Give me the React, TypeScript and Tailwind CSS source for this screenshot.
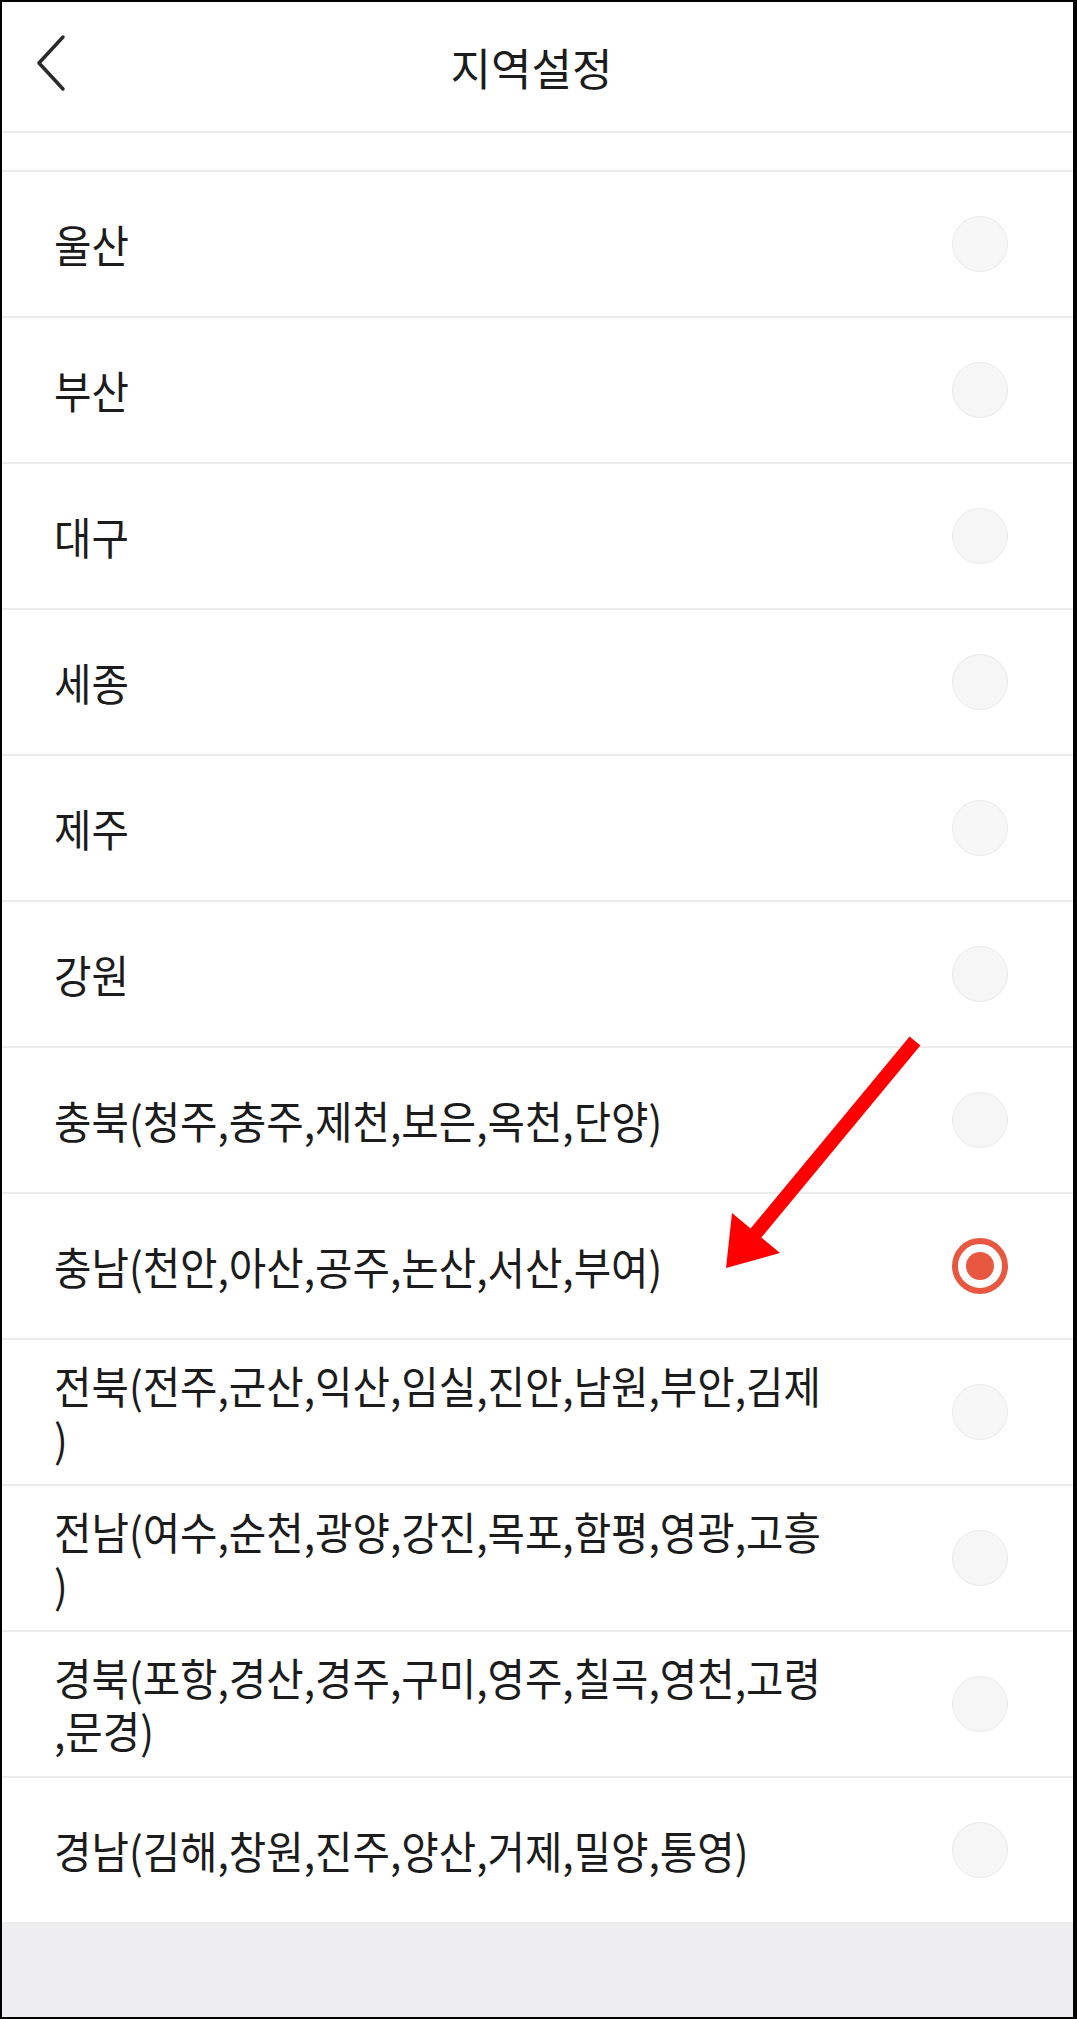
import React from "react";

type Row = { lines: string[]; selected?: boolean };

const rows: Row[] = [
  { lines: ["울산"] },
  { lines: ["부산"] },
  { lines: ["대구"] },
  { lines: ["세종"] },
  { lines: ["제주"] },
  { lines: ["강원"] },
  { lines: ["충북(청주,충주,제천,보은,옥천,단양)"] },
  { lines: ["충남(천안,아산,공주,논산,서산,부여)"], selected: true },
  { lines: ["전북(전주,군산,익산,임실,진안,남원,부안,김제", ")"] },
  { lines: ["전남(여수,순천,광양,강진,목포,함평,영광,고흥", ")"] },
  { lines: ["경북(포항,경산,경주,구미,영주,칠곡,영천,고령", ",문경)"] },
  { lines: ["경남(김해,창원,진주,양산,거제,밀양,통영)"] },
];

function Radio({ selected }: { selected?: boolean }) {
  if (selected) {
    return (
      <div className="flex h-[56px] w-[56px] shrink-0 items-center justify-center rounded-full border-[6px] border-[#e8573f]">
        <div className="h-[28px] w-[28px] rounded-full bg-[#e8573f]" />
      </div>
    );
  }
  return (
    <div className="h-[56px] w-[56px] shrink-0 rounded-full border-[1.5px] border-[#ebebeb] bg-[#f6f6f6]" />
  );
}

export default function App() {
  return (
    <div className="relative flex h-[2019px] w-full flex-col overflow-hidden border-b-2 border-l-2 border-r-4 border-t-2 border-black bg-white font-['Noto_Sans_CJK_KR','Noto_Sans_CJK_SC',sans-serif] text-[#1c1c1c]">
      {/* Header */}
      <div className="relative flex h-[131px] shrink-0 items-center justify-center border-b-2 border-[#ececec]">
        <button className="absolute left-[30px] top-[30px] flex h-[62px] w-[40px] items-center justify-center">
          <svg width="34" height="58" viewBox="0 0 34 58" fill="none">
            <path d="M28 3 L4 29 L28 55" stroke="#2a2a2a" strokeWidth="3.5" strokeLinecap="round" strokeLinejoin="round" />
          </svg>
        </button>
        <h1 className="pr-[12px] text-[44px] font-normal leading-none">지역설정</h1>
      </div>

      {/* partially scrolled row */}
      <div className="h-[39px] shrink-0 border-b-2 border-[#ececec]" />

      {rows.map((r, i) => (
        <div
          key={i}
          className="flex h-[146px] shrink-0 items-center border-b-2 border-[#ececec] pl-[52px] pr-[65px]"
        >
          <div className="min-w-0 flex-1">
            <p className="origin-left scale-x-[0.925] whitespace-nowrap text-[44px] leading-[53px]">
              {r.lines[0]}
              {r.lines.length > 1 && (
                <>
                  <br />
                  {r.lines[1]}
                </>
              )}
            </p>
          </div>
          <Radio selected={r.selected} />
        </div>
      ))}

      <div className="flex-1 bg-[#eeeef0]" />

      {/* annotation arrow */}
      <svg
        className="pointer-events-none absolute left-[-2px] top-[-2px]"
        width="1077"
        height="2019"
        viewBox="0 0 1077 2019"
      >
        <polygon
          points="909.6,1036.5 920.4,1045.5 761.4,1237.5 780,1253 726,1268 732,1213 750.6,1228.5"
          fill="#ff0000"
        />
      </svg>
    </div>
  );
}
